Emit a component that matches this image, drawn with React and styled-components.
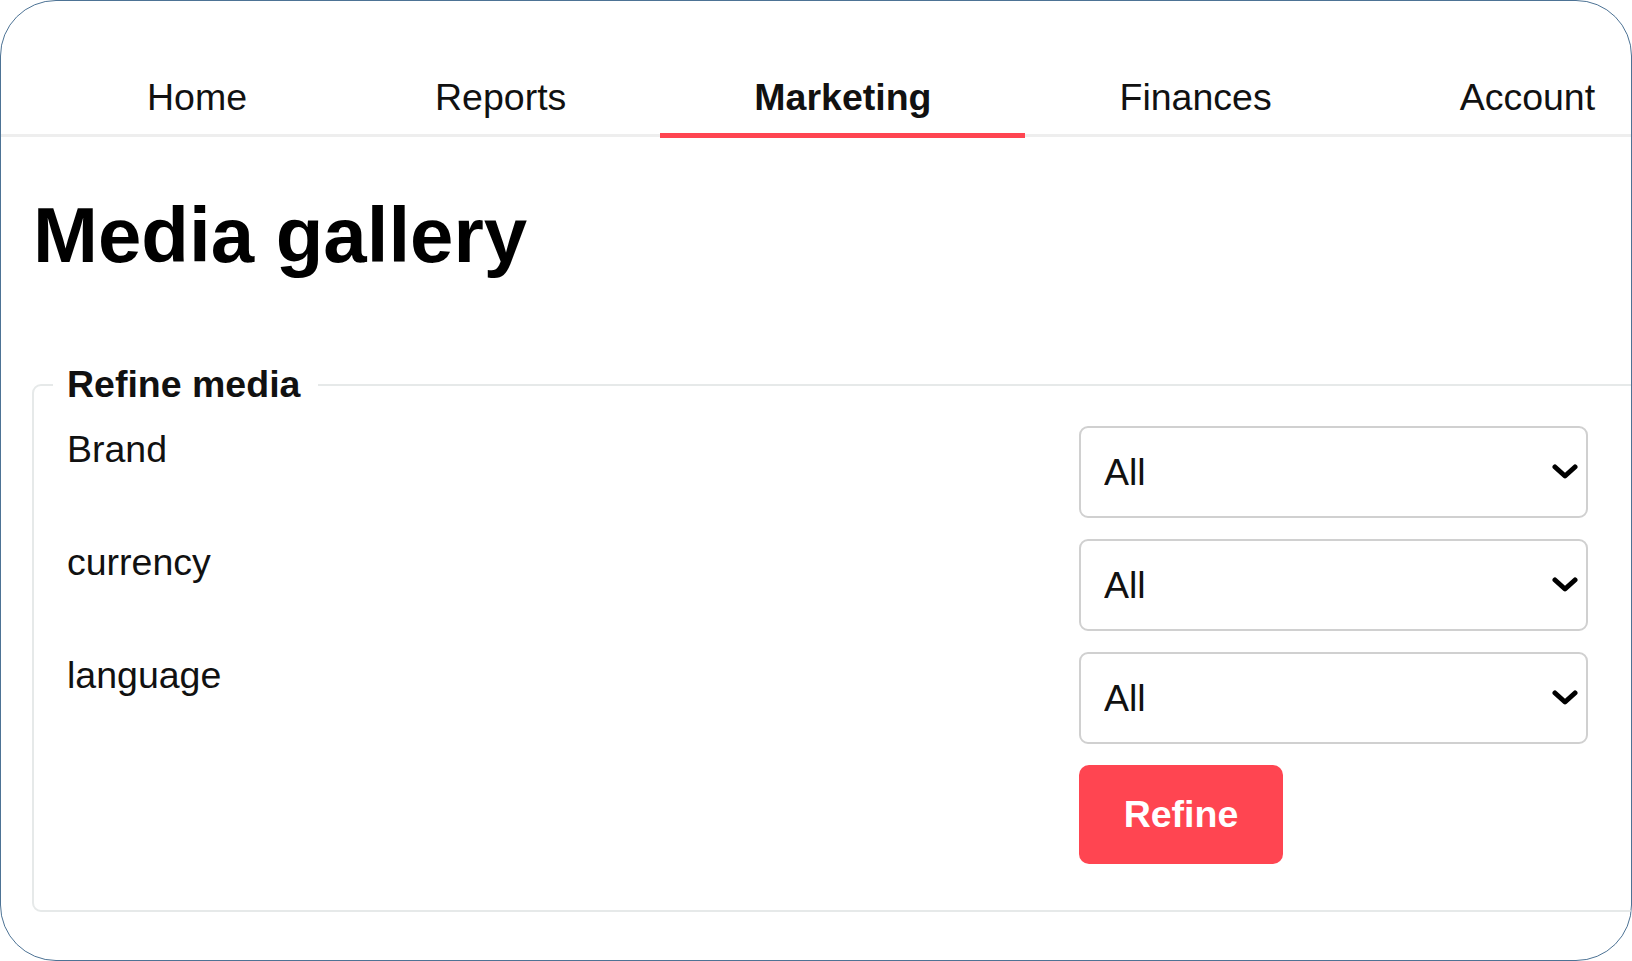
import React from "react";
import styled, { createGlobalStyle } from "styled-components";

const GlobalStyle = createGlobalStyle`
  html, body {
    margin: 0;
    padding: 0;
    background: #ffffff;
  }
  body {
    font-family: "Liberation Sans", Arial, Helvetica, sans-serif;
    color: #111111;
  }
  * {
    box-sizing: border-box;
  }
`;

const tabs = ["Home", "Reports", "Marketing", "Finances", "Account"];

const filters = [
  { name: "brand", label: "Brand" },
  { name: "currency", label: "currency" },
  { name: "language", label: "language" },
];

const Chevron = () => (
  <svg width="26" height="18" viewBox="0 0 26 18" aria-hidden="true">
    <path
      d="M3 4 L13 13 L23 4"
      fill="none"
      stroke="#000"
      strokeWidth="5"
      strokeLinecap="round"
      strokeLinejoin="round"
    />
  </svg>
);

const App = () => {
  return (
    <>
      <GlobalStyle />
      <Frame>
        <Nav>
          {tabs.map((t) => (
            <Tab key={t} $active={t === "Marketing"}>
              {t}
            </Tab>
          ))}
        </Nav>

        <Title>Media gallery</Title>

        <Fieldset>
          <Legend>Refine media</Legend>
          <FilterGrid>
            {filters.map((f) => (
              <React.Fragment key={f.name}>
                <Label htmlFor={f.name}>{f.label}</Label>
                <SelectWrap>
                  <Select id={f.name} defaultValue="all">
                    <option value="all">All</option>
                  </Select>
                  <ChevronSlot>
                    <Chevron />
                  </ChevronSlot>
                </SelectWrap>
              </React.Fragment>
            ))}
            <span />
            <div>
              <Button type="button">Refine</Button>
            </div>
          </FilterGrid>
        </Fieldset>
      </Frame>
    </>
  );
};

const Frame = styled.div`
  width: 1632px;
  height: 961px;
  border: 1px solid #4d7395;
  border-radius: 56px;
  overflow: hidden;
  background: #ffffff;
`;

const Nav = styled.nav`
  display: flex;
  padding-left: 52px;
  border-bottom: 3px solid #eeeeee;
  white-space: nowrap;
`;

const Tab = styled.a`
  padding: 75px 94px 14px;
  margin-bottom: -4px;
  font-size: 37.5px;
  line-height: 43px;
  font-weight: ${(p) => (p.$active ? 700 : 400)};
  color: #111111;
  border-bottom: 5px solid ${(p) => (p.$active ? "#ff4551" : "transparent")};
  flex-shrink: 0;
  cursor: pointer;
`;

const Title = styled.h1`
  margin: 59px 0 0;
  padding-left: 32px;
  font-size: 78px;
  line-height: 78px;
  font-weight: 700;
  color: #000000;
`;

const Fieldset = styled.fieldset`
  width: 1660px;
  margin: 89px 0 0 31px;
  padding: 0 0 46px 19px;
  border: 2px solid #e6e9e9;
  border-radius: 9px;
`;

const Legend = styled.legend`
  padding: 0 18px 0 14px;
  font-size: 37.5px;
  line-height: 43px;
  font-weight: 700;
  color: #111111;
`;

const FilterGrid = styled.div`
  display: grid;
  grid-template-columns: 1012px 509px;
  row-gap: 21px;
  margin-top: 20px;
  padding-left: 14px;
`;

const Label = styled.label`
  font-size: 37.5px;
  line-height: 43px;
  padding-top: 2px;
  color: #111111;
`;

const SelectWrap = styled.div`
  position: relative;
  width: 509px;
`;

const Select = styled.select`
  appearance: none;
  -webkit-appearance: none;
  display: block;
  width: 100%;
  height: 92px;
  padding: 0 60px 0 23px;
  border: 2px solid #d0d0d0;
  border-radius: 9px;
  background: #ffffff;
  font-family: "Liberation Sans", Arial, Helvetica, sans-serif;
  font-size: 37.5px;
  color: #111111;
  outline: none;
`;

const ChevronSlot = styled.span`
  position: absolute;
  top: 50%;
  right: 10px;
  transform: translateY(-50%);
  display: flex;
  pointer-events: none;
`;

const Button = styled.button`
  width: 204px;
  height: 99px;
  border: none;
  border-radius: 10px;
  background: #ff4551;
  color: #ffffff;
  font-family: "Liberation Sans", Arial, Helvetica, sans-serif;
  font-size: 37.5px;
  font-weight: 700;
  cursor: pointer;
`;

export default App;
